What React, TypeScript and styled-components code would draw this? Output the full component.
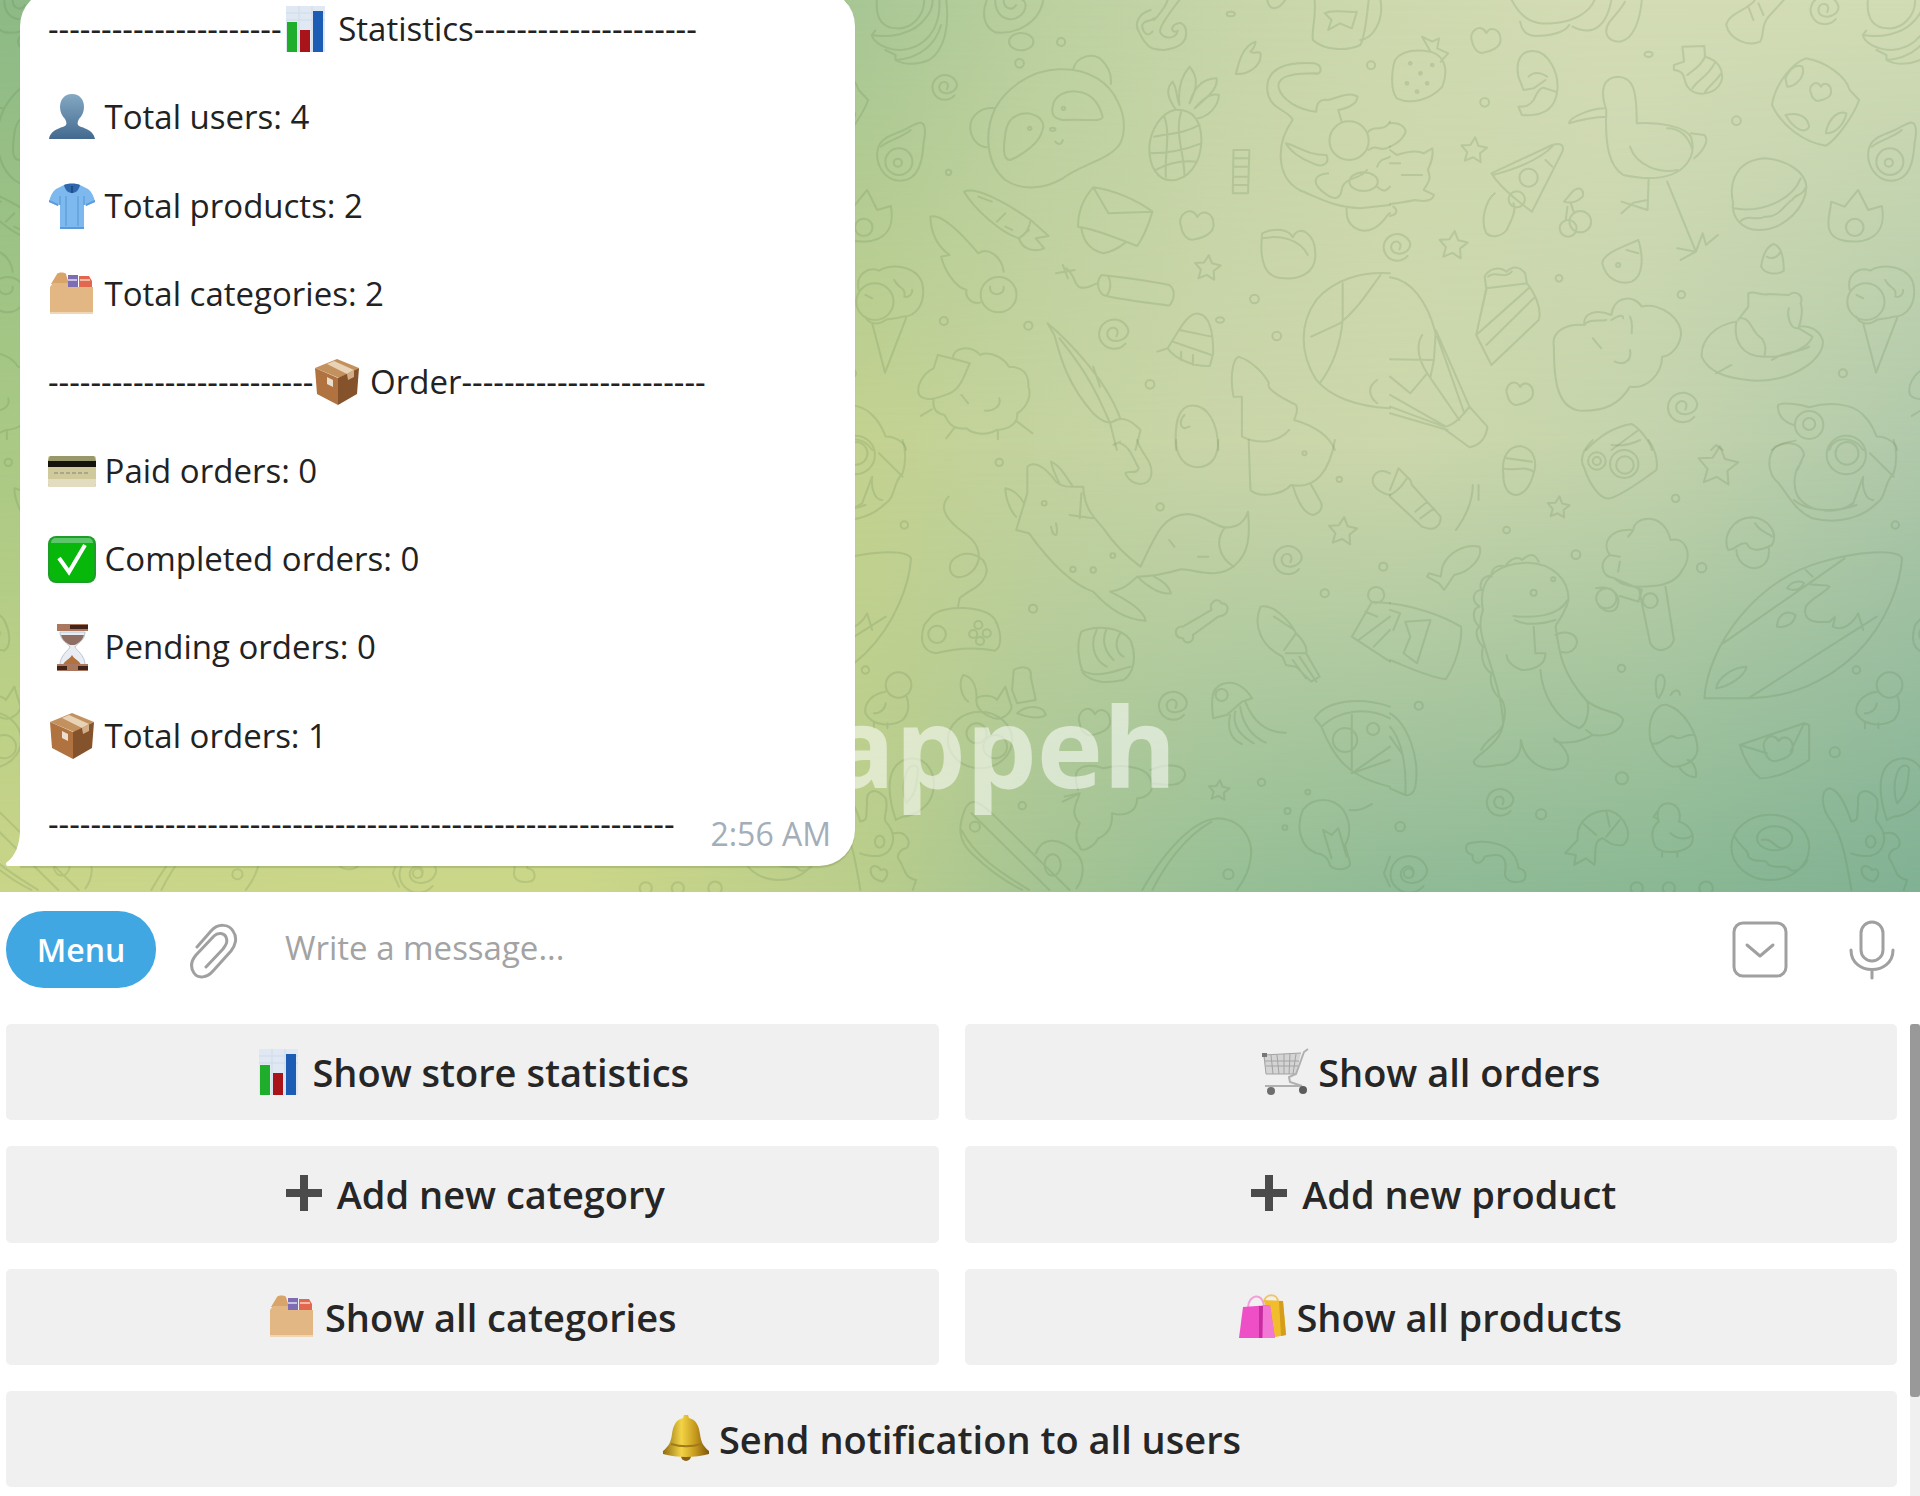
import React from 'react';
import styled, { createGlobalStyle } from 'styled-components';

const GlobalStyle = createGlobalStyle`
  *, *::before, *::after { box-sizing: border-box; }
  body {
    margin: 0;
    background: #ffffff;
    font-family: "Open Sans", "Noto Sans", sans-serif;
    color: #222222;
  }
  button, input { font-family: inherit; }
`;

/* ---------- wallpaper doodles ---------- */

const ring = (x: number, y: number, r: number, ry: number = r) =>
  `M${x - r} ${y}a${r} ${ry} 0 1 0 ${2 * r} 0a${r} ${ry} 0 1 0 ${-2 * r} 0`;

const swirl = (x: number, y: number, r: number) =>
  `M${x + r * 0.8} ${y + r * 0.7}A${r} ${r} 0 1 1 ${x + r} ${y - r * 0.2}` +
  `C${x + r} ${y + r * 0.7} ${x - r * 0.6} ${y + r * 0.8} ${x - r * 0.4} ${y - r * 0.1}` +
  `C${x - r * 0.2} ${y - r * 0.6} ${x + r * 0.5} ${y - r * 0.4} ${x + r * 0.2} ${y + r * 0.2}`;

const star = (x: number, y: number, r: number) => {
  const points = Array.from({ length: 10 }, (_, i) => {
    const a = (Math.PI / 5) * i - Math.PI / 2 + 0.1;
    const d = i % 2 ? r * 0.5 : r;
    return `${(x + d * Math.cos(a)).toFixed(1)} ${(y + d * Math.sin(a)).toFixed(1)}`;
  });
  return `M${points.join('L')}Z`;
};

const heart = (x: number, y: number, r: number) =>
  `M${x} ${y - r * 0.5}C${x - r * 0.4} ${y - r * 1.3} ${x - r * 1.3} ${y - r * 0.6} ${x - r} ${y + r * 0.1}` +
  `C${x - r * 0.9} ${y + r * 0.7} ${x - r * 0.5} ${y + r} ${x - r * 0.2} ${y + r * 0.9}` +
  `C${x + r * 0.4} ${y + r * 0.8} ${x + r} ${y + r * 0.5} ${x + r} ${y}C${x + r} ${y - r * 0.8} ${x + r * 0.3} ${y - r} ${x} ${y - r * 0.5}Z`;

const topLeft = [
  // bananas
  'M50 0C45 60 70 85 110 85C150 88 190 50 190 0M35 105C90 115 150 100 180 70C210 40 215 20 215 0M35 105C40 130 80 150 120 150C190 145 240 90 235 0M45 92L35 105M105 180C180 175 225 130 240 75M105 180C130 195 170 195 205 180C250 150 265 80 255 0M75 150L105 165V180',
  // snail bubble
  'M375 0C360 40 365 80 400 97C450 105 530 75 542 0M400 0C400 45 430 65 460 55C495 40 495 5 480 0M425 0C425 25 450 35 462 15',
  ring(477, 125, 36, 26), ring(595, 126, 12), ring(472, 190, 13), swirl(250, 260, 37),
  // avocado
  'M175 368C195 365 195 395 188 430C185 480 175 545 115 542C70 540 45 490 52 450C60 410 100 405 130 390C150 380 165 370 175 368Z',
  'M62 440C75 425 130 410 150 390', ring(115, 485, 40), ring(112, 488, 12), ring(262, 517, 8),
  // panda
  'M400 325C430 270 500 210 590 208C680 205 740 250 765 310C785 350 785 400 770 430C740 480 660 490 600 535C550 565 480 575 430 540C375 495 365 400 400 325Z',
  'M632 205C640 170 690 155 715 180C735 200 745 225 742 252M400 325C360 320 325 345 326 385C330 420 350 440 375 442',
  'M570 320C575 285 610 270 645 275C690 280 710 320 718 350C715 365 690 358 600 360C575 355 565 345 570 320ZM430 400C435 360 460 340 495 340C535 345 550 370 538 395C530 430 480 465 445 480C420 480 425 440 430 400Z',
  ring(602, 325, 5), ring(502, 385, 5), ring(570, 388, 8, 5), 'M578 425C585 435 598 435 600 420',
  // pineapple
  'M930 330C890 340 860 390 856 440C855 500 880 540 920 541C970 540 1010 490 1010 420C1010 370 990 325 930 330ZM870 410C920 400 960 400 1005 375M858 460C910 460 960 450 1010 430M875 510C910 490 950 480 995 485M900 350C920 400 900 470 905 530M950 335C930 400 960 460 960 530',
  'M935 330C915 300 900 270 925 245C940 270 935 290 945 315C940 270 950 230 975 200C1000 230 1000 260 975 310C985 270 1010 235 1055 235C1060 265 1030 290 990 325C1020 290 1040 280 1062 285C1060 320 1030 350 1000 355',
  // anchor
  'M860 30C825 40 810 70 825 95C850 150 870 150 900 150C940 145 965 130 965 100C965 75 950 60 930 75C915 90 930 100 940 92C935 115 905 120 890 100C880 90 900 60 945 0M865 95C850 115 835 95 835 75C840 60 860 65 870 55M870 60C880 50 905 20 910 0',
  'M1170 125C1130 140 1120 190 1112 222C1145 225 1190 200 1185 160C1180 150 1165 165 1155 155C1165 145 1170 135 1170 125Z',
  'M1105 450H1152L1148 580H1103ZM1105 475H1150M1105 500H1148M1104 530H1148M1104 555H1148',
  // mug
  'M1345 0C1350 60 1335 90 1340 120C1370 150 1440 155 1480 135C1495 110 1500 40 1505 0M1480 120C1520 115 1550 60 1540 0M1375 40C1400 25 1440 40 1470 35L1455 85L1420 70L1385 90L1395 60Z',
  'M1205 0C1210 30 1235 35 1258 0', ring(1097, 42, 12, 7), ring(1512, 196, 12),
  // carrot
  'M308 575C340 560 420 600 505 660C500 690 490 705 470 715C420 700 340 630 308 575ZM505 660L558 708L520 715L545 745C510 760 480 745 470 715L500 690M350 590L390 605M405 665L430 640M430 680L450 690',
  // comet
  'M208 650C240 640 300 700 350 760C380 740 420 770 425 815M208 650C210 700 230 740 265 765L240 770C250 810 280 860 315 870C310 890 330 915 355 908', ring(410, 884, 53), 'M385 860C380 890 430 890 425 860',
  // envelope
  'M690 562C750 570 820 600 865 635C855 670 840 710 820 738C770 720 710 690 645 680C645 630 665 590 690 562ZM690 562L735 640L865 635M655 685C660 720 680 750 720 760C750 755 770 740 785 728',
  heart(998, 675, 48), star(1028, 805, 40),
  // peach
  'M1190 700C1230 680 1270 690 1280 712C1300 670 1350 700 1347 770C1345 820 1300 838 1255 835C1200 835 1180 790 1190 700ZM1190 715C1240 705 1300 715 1325 765',
  // candle
  'M715 825C760 830 870 845 915 855C935 870 930 900 915 917C870 910 770 900 720 885C700 870 700 840 715 825ZM735 830C745 850 740 875 730 887M705 850C690 850 680 870 650 862C630 850 640 830 610 805M580 820L635 810M600 795L615 835',
  ring(248, 963, 12), ring(498, 977, 12), ring(1167, 897, 13), ring(1233, 1008, 13), ring(858, 1153, 13), swirl(750, 1000, 44), ring(1065, 960, 12, 8),
  // bell
  'M910 1045C940 1000 970 930 1005 942C1040 950 1045 1010 1045 1060L1035 1098C990 1100 935 1080 910 1045ZM945 990L1040 1010M925 1025L1040 1065M950 1055V1080M985 1065V1095M910 1045L880 1055',
  // sheep
  'M230 1065L218 1105C185 1120 165 1160 175 1185C195 1210 240 1190 265 1180C300 1165 310 1120 325 1090L270 1075L230 1065ZM275 1075C275 1040 330 1035 355 1065C390 1050 430 1080 440 1100C480 1100 500 1120 498 1160C510 1190 490 1225 465 1240C470 1275 430 1290 405 1290C370 1310 330 1300 315 1285C270 1290 260 1265 250 1245C220 1240 215 1220 218 1200M180 1248L212 1228M255 1315L278 1285M408 1318V1292M510 1300L465 1265M300 1185L320 1210M370 1232C390 1235 420 1220 412 1195',
  // paintbrush
  'M555 970C590 1000 720 1120 770 1255C740 1275 720 1270 690 1240C610 1150 590 1060 575 1005ZM590 1015C650 1090 690 1150 740 1270M740 1270C780 1240 810 1270 830 1290L815 1350M740 1270L760 1350M690 1100L710 1160',
  // egg shape
  'M935 1350C930 1270 940 1220 980 1217C1030 1215 1060 1270 1060 1350M960 1245C945 1260 945 1280 960 1285L975 1280',
  // tree
  'M1105 1190C1095 1140 1100 1080 1120 1070C1150 1080 1190 1110 1210 1150C1200 1165 1240 1190 1290 1215C1300 1235 1285 1250 1285 1260C1350 1280 1390 1310 1405 1350M1105 1190H1130V1310C1170 1330 1230 1335 1270 1290',
  // hot-air balloon
  'M1568 820C1480 815 1400 840 1350 900C1300 970 1300 1060 1350 1140C1390 1190 1470 1220 1568 1225M1428 850V960C1420 1050 1390 1110 1360 1150M1540 825C1500 880 1470 930 1420 970L1335 1010M1530 1140C1500 1160 1505 1190 1530 1210',
  // cat on a ring
  'M1345 190C1270 185 1200 200 1205 270C1210 330 1270 330 1280 360C1230 430 1230 530 1300 570C1370 600 1400 620 1480 625L1568 615M1350 220C1290 220 1235 225 1238 260C1245 300 1300 330 1350 335C1350 310 1360 295 1385 300C1420 290 1450 275 1472 290C1470 315 1440 325 1415 330L1425 365M1345 190C1365 195 1370 218 1350 222M1260 430C1300 440 1320 465 1380 465C1390 490 1370 505 1340 490C1300 475 1270 450 1260 430ZM1385 520C1340 525 1335 550 1375 580C1400 600 1420 600 1425 570C1430 530 1480 540 1500 510',
  ring(1447, 422, 58), ring(1490, 545, 42, 28), 'M1440 625C1435 680 1480 705 1520 685C1550 670 1560 640 1568 640',
  'M1500 400C1520 370 1550 400 1568 365M1505 450C1530 430 1540 460 1568 440M1530 500C1540 470 1560 480 1568 470M1530 560C1550 580 1560 570 1568 560',
].join('');

const topRight = [
  'M360 0C390 60 430 75 480 70C540 65 590 40 605 0M385 65C390 90 400 105 430 108C480 108 520 95 530 75M540 80C600 110 640 80 655 0M745 0C740 60 720 120 680 125C640 125 630 95 650 65C670 40 690 20 695 5',
  heart(285, 120, 42),
  // strawberry
  'M15 180C40 145 90 150 120 155C170 170 170 220 155 260C120 300 60 315 20 295C0 270 5 210 15 180ZM120 155L95 110L125 125L145 115L140 145L172 160L150 185',
  ring(60, 190, 4), ring(90, 220, 4), ring(50, 250, 4), ring(110, 250, 4), ring(80, 275, 4), ring(125, 195, 4),
  // kitten holding on to the ring
  'M0 370C30 365 50 385 45 400C30 430 10 435 0 440M0 450L20 465C50 455 80 450 100 460L125 445C130 470 120 490 112 510C125 540 110 550 100 570L130 585C125 605 100 605 75 600C50 605 20 610 0 612M0 490H30M35 525H95M10 620C25 630 20 645 0 648',
  // hatching egg
  'M380 230C370 180 390 150 425 153C470 155 500 220 495 270C490 330 450 350 390 345L380 320C400 320 410 320 425 300C440 265 450 260 460 265L490 275M380 230L395 270L425 265L460 240M410 230C430 210 450 220 465 230',
  ring(280, 307, 13), ring(765, 163, 12, 8), ring(1025, 362, 13), ring(862, 884, 11), ring(500, 835, 10), ring(1340, 1120, 12),
  // bone and swirl
  'M1080 0C1060 30 1000 40 995 75C1005 120 1060 140 1095 125C1110 100 1095 80 1120 50L1165 0M1060 20L1075 60M1090 10L1105 45', swirl(1285, 28, 42),
  // acorn
  'M865 140L930 138L932 170C970 180 990 210 980 245C960 290 900 290 880 260C865 240 880 215 840 210L840 195L870 185ZM932 170C920 200 890 215 880 225M960 190C940 230 910 240 895 265M980 220C960 250 940 260 930 280',
  // stork
  'M640 330C620 270 630 232 675 230C720 232 730 270 730 370C800 365 870 380 890 410C900 440 900 470 870 500C830 540 760 540 690 525C650 500 635 440 640 330ZM635 325C600 325 530 350 530 370C560 360 610 350 640 350M890 400L930 405C945 420 930 450 900 475M710 440C730 500 800 520 850 510M820 385C850 385 880 400 895 450M765 540L762 630L685 605M762 600L720 608L685 640M820 545L905 755L850 745M905 755L860 780M905 755L925 700L935 735L970 705',
  // cherries and pizza
  ring(563, 665, 32), ring(527, 685, 25), 'M540 575C560 555 575 570 570 590C550 610 530 610 515 605L540 575M535 610L545 640M525 620L520 660',
  'M300 520L480 435C510 425 515 440 510 455L420 635C400 620 330 570 300 520ZM305 525C380 505 440 480 480 440M310 580C285 600 265 660 285 700C300 715 330 710 345 690C360 660 375 630 365 610M460 480L480 500', ring(410, 533, 27), ring(375, 598, 24),
  star(248, 452, 40), star(187, 737, 44), swirl(20, 740, 40),
  // pillow with hearts
  'M1230 175C1290 185 1350 230 1360 270L1388 300C1370 350 1320 420 1290 437C1230 430 1160 380 1130 315C1140 250 1190 190 1230 175ZM1170 235C1180 210 1200 190 1220 200C1230 230 1200 260 1175 260ZM1170 345C1210 335 1235 350 1240 380C1230 400 1200 395 1170 345ZM1290 395C1300 350 1330 330 1350 340C1345 370 1320 400 1290 400Z', heart(1275, 275, 30),
  // burger
  'M1015 610C1000 540 1030 480 1110 475C1180 480 1230 520 1232 560C1230 620 1170 690 1090 690C1040 690 1010 650 1015 610ZM1015 625C1100 640 1190 600 1215 535M1035 665C1060 640 1080 665 1110 650C1150 655 1170 610 1190 600C1200 580 1220 590 1228 565',
  // fire
  'M1385 570L1415 630L1455 618C1465 670 1450 710 1400 722C1350 730 1310 720 1300 690C1290 660 1305 630 1305 605L1345 620Z', ring(1375, 682, 26),
  'M735 720C690 740 630 760 628 790C640 840 680 855 715 845C750 830 750 770 735 720ZM700 750L735 760', ring(675, 795, 6),
  'M1135 732C1110 740 1100 780 1098 800C1110 825 1150 825 1165 812C1165 780 1160 740 1135 732ZM1115 770C1130 780 1150 770 1155 755',
  // cake slice
  'M280 830L285 865L255 1005L300 1095L440 960C450 930 430 880 405 850L400 820C380 795 360 800 345 815C320 795 290 810 280 830ZM285 865L405 850M255 1005L410 865M285 1035L430 890M285 870L260 980M290 830C310 810 340 840 360 815',
  // balloon right half
  'M0 832C60 840 110 900 135 1000L130 1080L0 1078M0 1185L165 1280C190 1275 220 1240 235 1220L135 990M95 1005C75 1040 85 1080 110 1120L60 1180L0 1130M110 1120L205 1260M140 1010L220 1240M130 1080L120 1130M0 1220L160 1280M0 1240L170 1290M235 1220L288 1280C285 1310 270 1335 235 1342L165 1290',
  heart(385, 1180, 38),
  // cloud
  'M485 1040C475 990 530 970 575 975C570 940 610 925 655 945C660 890 720 880 745 920C800 905 870 960 860 1010C855 1040 830 1070 805 1070C805 1120 760 1170 710 1160C680 1210 640 1235 560 1232C490 1220 485 1130 485 1040ZM575 975C590 955 620 965 640 960M710 950C720 970 715 985 715 1000M655 960C670 950 690 940 690 955M600 1015L625 1045M665 1085C700 1100 715 1075 710 1050', swirl(865, 1220, 44),
  // bear in a ring
  'M1060 880C1080 870 1100 890 1120 882L1180 885C1200 870 1225 885 1215 910C1225 935 1210 990 1205 985C1180 985 1175 940 1180 925M1060 880L1060 920L1030 960M1025 965C960 975 920 1020 922 1070C940 1110 980 1135 1080 1142C1200 1145 1290 1070 1280 1020C1270 990 1240 975 1210 980M1025 965C1015 1020 1040 1070 1105 1070C1180 1075 1240 1040 1250 1010L1210 985M1040 955C1070 955 1070 1000 1100 1015C1115 1040 1110 1050 1108 1070M965 1120L1010 1095M1130 1080C1170 1050 1210 1060 1240 1040',
  // ice cream
  ring(1408, 905, 55), 'M1360 870C1350 820 1390 800 1420 812C1450 790 1530 795 1548 850C1560 910 1530 950 1490 950C1470 958 1450 955 1440 960C1420 975 1390 975 1380 950M1465 840C1480 870 1500 860 1495 890C1510 895 1520 880 1518 870M1400 970L1438 1118L1500 955M1380 885L1400 895',
  'M580 1350C620 1310 660 1280 715 1272C745 1290 770 1330 775 1350M655 1350L735 1290M950 1350L965 1335L985 1350',
  // penguin head
  'M1195 1275C1160 1265 1145 1240 1148 1215C1170 1205 1220 1215 1240 1222C1300 1205 1370 1210 1400 1245C1430 1275 1435 1300 1440 1310C1470 1310 1500 1330 1500 1350M1130 1350C1150 1330 1180 1325 1200 1322M1300 1350C1310 1310 1370 1305 1400 1350', ring(1240, 1275, 42), ring(1240, 1272, 18),
].join('');

const bottomLeft = [
  ring(412, 67, 11), ring(888, 201, 11), ring(512, 506, 12), ring(1315, 40, 6), ring(1418, 118, 8), ring(1375, 460, 12), ring(1548, 380, 12), ring(480, 1097, 11), ring(1188, 1027, 11), ring(1090, 1303, 15),
  'M770 10C800 20 810 60 825 85C820 105 790 90 785 100C800 140 860 145 862 100C865 60 830 40 820 0M750 15L770 5M935 0C935 50 960 80 998 82C1040 80 1060 50 1060 0',
  'M1150 0L1155 150C1180 175 1250 165 1275 135C1350 150 1390 90 1405 0M1280 135C1290 170 1310 220 1340 225C1370 215 1370 195 1360 180L1335 135',
  // cable and gamepad
  'M262 170C235 200 250 230 290 265C330 295 350 310 352 350C350 385 320 412 290 412C260 405 260 370 280 355C310 330 370 340 375 390C370 440 320 450 295 475L290 500',
  'M215 525C250 495 370 495 400 540C420 580 420 620 400 632C340 620 280 625 225 640C185 635 175 600 190 555Z', ring(228, 583, 26), ring(350, 555, 12), ring(375, 580, 12), ring(335, 582, 12), ring(355, 603, 12),
  // fox
  'M495 80C510 65 540 70 580 125C600 145 630 140 660 140C665 200 680 220 720 265C750 310 790 350 830 380C880 270 900 225 970 222C1020 225 1050 260 1080 262C1120 265 1140 240 1148 215C1155 290 1150 340 1110 375C1060 420 1000 390 950 388C910 400 870 410 820 410C790 440 770 450 740 455M495 80L495 160L462 270L500 280C550 350 620 430 690 455C730 500 780 540 845 542C840 510 790 480 740 455M430 145C430 180 450 220 462 230M430 145C455 150 475 170 485 190M565 65C590 75 610 110 630 140M565 65C570 90 580 110 590 130M1080 262C1050 300 1060 350 1105 380M820 410C850 440 890 465 920 460C915 440 900 425 870 410M620 225L690 235M655 160L650 235M565 260C570 290 590 300 580 250', ring(545, 190, 7), ring(630, 388, 8), ring(690, 390, 8), ring(748, 347, 7),
  'M915 300L930 320M1000 350H1030',
  star(1428, 275, 44), swirl(1265, 358, 42), swirl(925, 795, 42), star(1062, 1052, 32),
  // bone
  'M955 560L1040 510C1030 485 1060 470 1070 490C1095 490 1095 525 1060 530L985 585C990 610 960 615 955 595C925 595 930 555 955 560Z',
  // shell
  'M655 575C700 555 770 560 800 600C820 650 810 700 780 720C730 730 690 730 660 700C645 660 640 610 655 575ZM700 570C680 610 690 660 730 680M730 565C710 610 730 640 750 660M770 580C750 610 760 640 780 650M655 690C700 720 760 690 800 680',
  // squid
  'M1185 500C1220 490 1270 540 1290 580C1310 600 1325 620 1320 640L1360 710L1335 725L1290 680L1260 675L1250 650C1190 620 1160 560 1185 500ZM1290 580L1255 630M1320 640L1260 640M1300 650L1350 725M1280 660L1320 715M1225 530L1285 570',
  // flag left half
  ring(1527, 465, 24), 'M1568 490L1515 485L1455 590L1568 665M1495 515L1530 530M1520 620L1568 570M1475 600L1568 530M1568 100C1530 80 1510 110 1520 135C1535 160 1568 165 1568 165',
  // potted deer
  'M305 705C330 710 345 735 345 775C365 760 400 770 405 780L430 740L445 790C460 810 420 850 385 830C360 820 340 800 345 775M455 690C480 675 510 680 505 710L520 780L465 790L450 750ZM305 705C290 730 300 770 320 785M465 820C500 790 545 800 550 825C530 840 490 830 465 820', ring(355, 900, 95, 85), ring(345, 880, 30), ring(400, 920, 35),
  heart(695, 845, 45),
  // jellyfish
  'M1045 760C1060 720 1120 710 1160 775L1130 785L1085 825L1045 835C1040 800 1040 780 1045 760ZM1095 825C1085 870 1100 900 1130 912M1110 815C1100 860 1130 890 1165 910M1125 800C1130 850 1160 890 1200 908M1140 785C1160 840 1200 880 1260 878', ring(1070, 765, 18),
  // pizza
  'M1345 835C1380 780 1480 770 1568 800M1345 835L1365 860C1420 810 1500 800 1568 835M1365 860C1400 950 1440 1010 1568 1040M1455 815V1000L1568 920M1455 1000L1568 960', ring(1435, 900, 36), ring(1518, 867, 18),
  // smoke
  'M640 1000C650 970 700 975 720 985C780 970 860 980 862 1030C870 1060 840 1075 820 1075C820 1120 780 1130 745 1120C750 1170 720 1190 705 1195C690 1225 650 1240 650 1220C630 1190 645 1160 650 1150C620 1120 640 1090 650 1060L600 1085M650 1060L605 1070M640 1000C635 1020 640 1030 645 1050M860 990C900 970 960 970 962 1005C955 1045 900 1035 862 1030',
  // ship
  'M310 1110C290 1160 290 1200 330 1240C390 1300 440 1330 480 1350M310 1110C330 1060 370 1100 400 1130L620 1350M330 1120L560 1350M300 1170C340 1250 420 1300 500 1350M520 1240C540 1190 590 1190 640 1240C670 1270 660 1320 640 1345', ring(340, 1160, 15), ring(570, 1275, 24, 32),
  // whale
  'M835 1350C880 1270 970 1140 1060 1135C1140 1140 1165 1210 1155 1260C1150 1300 1130 1330 1115 1350M865 1350C900 1280 960 1190 1040 1145',
  // light bulb
  'M1390 1275C1385 1250 1365 1240 1350 1240C1300 1220 1290 1160 1310 1110C1340 1070 1400 1070 1430 1110C1455 1150 1450 1190 1435 1215C1440 1240 1450 1260 1450 1275C1435 1295 1400 1290 1390 1275ZM1370 1170L1395 1255M1415 1165L1440 1250M1370 1170L1395 1185L1415 1165',
  ring(1265, 1113, 9), ring(1257, 1163, 7), ring(1325, 1056, 7), 'M1448 1110C1480 1115 1500 1100 1515 1092M1568 1250L1550 1300L1568 1340',
].join('');

const bottomRight = [
  // flashlight
  'M0 150L25 85L60 120L65 135L150 230C150 260 130 275 95 260L0 170M0 165C30 150 40 130 50 115M75 215L110 185M90 235L130 205',
  'M245 135C245 190 220 235 195 270M262 135V180M335 100C330 50 350 20 385 18C430 25 435 70 425 100C415 140 395 165 370 165C340 160 335 130 335 100ZM335 85C365 95 400 75 425 95M345 55L420 65',
  star(498, 203, 34), star(970, 80, 62), ring(345, 270, 10), ring(845, 175, 11), ring(550, 344, 13), ring(922, 383, 14), ring(1495, 255, 11), ring(685, 685, 11), ring(85, 797, 12), ring(686, 1015, 18), ring(447, 1123, 15), ring(1316, 937, 15), ring(1380, 690, 11), ring(30, 1160, 14), ring(730, 1345, 18), ring(825, 1345, 18), ring(935, 1345, 20),
  // camera
  'M600 0C570 30 560 60 575 85C590 130 620 180 650 175C690 165 760 110 788 90C795 60 780 20 765 0M655 15C690 20 720 10 740 0', ring(693, 72, 42), ring(695, 75, 26), ring(612, 63, 26), ring(612, 63, 12),
  // penguin body
  'M1140 20C1115 50 1115 100 1150 130C1175 160 1195 210 1250 235C1330 255 1400 230 1440 190C1470 170 1460 130 1490 100C1500 70 1500 30 1490 0M1215 70C1190 100 1190 160 1220 185C1250 215 1320 225 1370 190L1400 110M1140 20C1180 0 1220 10 1225 45L1205 90M1195 180C1240 220 1330 215 1380 195M1400 110C1395 150 1410 180 1430 180M1420 40L1490 110', ring(1350, 45, 58), ring(1352, 40, 34),
  // fish
  'M155 380C170 340 220 310 265 320C275 350 240 395 190 405L160 450L145 430L110 410L115 400L150 410Z',
  // tree
  'M720 270C720 230 810 210 830 300C880 290 895 350 865 390C840 440 780 440 735 440C700 440 670 425 665 415C620 410 620 360 650 345C625 310 650 265 720 270M720 270L705 290M650 345L680 350M680 365L675 395M665 415L745 450L735 485L680 468M610 445C650 435 680 460 675 490C670 520 640 520 620 500M735 440L770 610C790 645 830 630 840 600L815 440', ring(770, 482, 22), ring(640, 475, 30),
  // mushroom
  'M1000 330C985 290 1010 235 1070 232C1120 235 1150 280 1130 315C1100 330 1070 340 1055 310C1030 305 1025 330 1000 330ZM1025 330C1025 360 1050 385 1080 385C1115 380 1125 350 1120 320M1080 250C1100 280 1115 275 1130 290',
  // dinosaur
  'M275 510C260 430 300 370 410 368C480 370 530 420 528 480C515 530 490 550 490 560C500 640 510 700 580 780C620 820 680 810 690 840C680 880 640 890 600 885C560 910 520 910 490 905L485 895C530 930 540 970 510 985C460 1000 400 970 387 900C390 940 370 975 320 975C270 985 240 980 250 960C280 930 330 900 335 850C330 760 300 690 275 600C265 560 265 540 275 510Z',
  'M365 528C420 535 500 530 525 480M370 540C400 560 460 550 490 540M425 560L430 640L460 640C460 680 420 690 390 690C360 680 345 660 345 645M445 690C450 760 490 840 560 865C590 850 590 790 580 780M600 885L580 870M490 585C520 570 555 580 553 610C545 640 520 640 505 635',
  'M390 360C420 335 430 345 440 365M340 380C360 350 385 350 390 360M300 410C300 375 330 375 340 380M270 450C260 420 290 400 300 410M265 500C235 480 250 450 270 450M265 560C240 540 245 500 265 500M275 620C255 600 250 570 265 560M300 700C270 680 270 640 275 620M320 770C300 750 295 720 300 700M335 850C345 820 340 780 320 770M270 930C280 900 330 880 335 850', ring(425, 458, 9), ring(483, 418, 6),
  // flag right half
  'M0 490C70 500 150 525 210 560C215 610 190 680 165 718C110 710 50 680 0 660M45 545L120 540L80 670L40 640L60 590ZM0 510L30 520L10 570',
  // pizza crust
  'M0 820C50 850 90 950 75 1040C70 1060 60 1068 45 1065L0 1045M0 860C35 900 50 980 45 1065M0 890L35 940',
  // surfboard
  'M930 775C940 620 1080 420 1280 365C1380 335 1500 325 1515 355C1510 430 1470 550 1380 640C1290 730 1170 775 1060 775ZM985 610L1240 430L1345 355M1060 775L1440 530M1240 430C1245 440 1290 430 1300 440C1280 465 1250 470 1230 500C1220 540 1250 550 1300 545C1320 530 1320 520 1310 560C1340 575 1370 550 1385 520L1400 570M965 745C970 710 1020 680 1055 680C1050 710 1000 740 965 745ZM1145 560C1145 530 1170 505 1200 525C1195 555 1165 565 1145 560ZM1175 445C1185 425 1215 420 1225 430C1215 450 1195 455 1175 445ZM1250 410L1230 390',
  // popsicle
  'M770 900C760 830 790 790 820 795C870 810 910 880 910 930C905 970 860 980 835 980C800 965 780 930 770 900ZM775 910C800 920 820 880 840 890C860 905 870 880 900 885M855 980C865 1000 890 1015 905 1010C910 980 890 960 880 960M790 770C780 720 790 700 805 705C820 720 810 750 795 775M830 765C840 750 855 745 858 765',
  // love letter
  'M1035 915L1225 850L1240 855L1240 960C1200 990 1140 1015 1095 1015C1065 990 1045 950 1035 915ZM1035 915L1115 940M1225 850L1185 935', heart(1150, 925, 42),
  // ducklings
  ring(1478, 735, 38), 'M1440 755C1400 760 1375 790 1380 820C1400 860 1460 860 1490 840C1510 820 1510 790 1500 765M1405 820C1425 820 1440 805 1440 790M1405 865V850M1445 865V850',
  'M795 1145C785 1110 800 1090 825 1090C860 1095 860 1130 855 1145C890 1155 905 1190 890 1215C860 1245 800 1240 785 1220C770 1190 775 1160 795 1145ZM795 1110L780 1130L795 1140M830 1180C850 1200 880 1200 895 1185M805 1250V1238M850 1250V1238',
  swirl(325, 1085, 40), swirl(55, 1300, 55), ring(55, 1300, 14),
  // bone and tooth
  'M235 1210C270 1200 370 1200 380 1285C410 1290 405 1325 385 1325C360 1330 340 1320 340 1300C350 1240 320 1240 280 1250C270 1280 240 1270 245 1245C220 1240 220 1215 235 1210Z',
  'M555 1200C550 1140 600 1110 650 1112C700 1130 720 1190 690 1215C650 1220 640 1200 630 1195C600 1200 610 1240 605 1275L580 1255L545 1275L550 1245L518 1240ZM570 1150L610 1185M640 1115L650 1160M680 1140L640 1190',
  // donut
  ring(1125, 1222, 115, 98), ring(1138, 1195, 52, 36), 'M1020 1190C1040 1230 1060 1225 1060 1250C1080 1275 1110 1250 1120 1275C1150 1290 1170 1270 1185 1290C1210 1300 1230 1270 1235 1260M1100 1200C1130 1190 1140 1230 1165 1225',
  // bunny with balloon
  'M1365 1350C1350 1260 1340 1200 1310 1150C1270 1100 1275 1050 1300 1045C1330 1050 1350 1100 1365 1145C1390 1140 1380 1130 1385 1090C1380 1050 1410 1040 1440 1075C1450 1110 1430 1130 1440 1145C1480 1190 1460 1240 1420 1248C1400 1250 1375 1245 1365 1240M1465 1180C1500 1170 1520 1210 1500 1225C1480 1230 1470 1250 1480 1260C1500 1290 1490 1310 1530 1320L1520 1350M1395 1290C1400 1270 1420 1280 1425 1290C1450 1280 1450 1310 1430 1325C1410 1320 1395 1310 1395 1290ZM1470 1140C1440 1050 1440 960 1520 955C1590 960 1600 1060 1555 1100C1530 1125 1500 1130 1490 1130ZM1500 1000C1510 970 1540 970 1535 995C1530 1040 1530 1060 1500 1090C1490 1060 1490 1030 1500 1000Z', ring(1422, 1205, 14, 18),
].join('');

const Wallpaper = styled.svg`
  position: absolute;
  z-index: 1;
  left: 0;
  bottom: 0;
  width: 1920px;
  height: 892px;
  fill: none;
  stroke: #567a48;
  stroke-opacity: 0.18;
  stroke-width: 6;
  stroke-linejoin: round;
  stroke-linecap: round;
`;

function Doodles() {
  return (
    <Wallpaper viewBox="0 0 1920 892" aria-hidden="true">
      <defs>
        <g id="doodle-tile">
          <path transform="translate(860 0) scale(.338 .3333)" d={topLeft} />
          <path transform="translate(1390 0) scale(.338 .3333)" d={topRight} />
          <path transform="translate(860 440) scale(.338 .3333)" d={bottomLeft} />
          <path transform="translate(1390 440) scale(.338 .3333)" d={bottomRight} />
        </g>
      </defs>
      <use href="#doodle-tile" />
      <use href="#doodle-tile" x="-991" />
      <use href="#doodle-tile" x="991" />
    </Wallpaper>
  );
}

/* ---------- emoji ---------- */

const EmojiSvg = styled.svg`
  flex: none;
  width: 48px;
  height: 48px;
`;

type EmojiName =
  | 'chart' | 'user' | 'shirt' | 'folder' | 'box' | 'card' | 'check'
  | 'hourglass' | 'cart' | 'plus' | 'bags' | 'bell';

const drawings: Record<EmojiName, React.ReactNode> = {
  chart: (
    <>
      <rect x="4" y="1" width="39" height="46" fill="#dfe8f3" />
      <path d="M4 8h39M4 15h39M17 1v46M30 1v46" stroke="#cfdcea" strokeWidth="1" />
      <rect x="5" y="17" width="10" height="30" fill="#1fae2b" />
      <rect x="18" y="25" width="10" height="22" fill="#a81419" />
      <rect x="31" y="6" width="10" height="41" fill="#1c5cb4" />
    </>
  ),
  user: (
    <>
      <linearGradient id="user-fill" x1="0" y1="0" x2="0" y2="1">
        <stop offset="0" stopColor="#84a9c4" />
        <stop offset="1" stopColor="#43698f" />
      </linearGradient>
      <path
        fill="url(#user-fill)"
        d="M24 1c8 0 12 6 12 13 0 5-2 9-5 12-1 2-2 4-1 6 2 3 15 3 17 14H1c2-11 15-11 17-14 1-2 0-4-1-6-3-3-5-7-5-12C12 7 16 1 24 1z"
      />
    </>
  ),
  shirt: (
    <>
      <path fill="#7db9ee" d="M16 3l-8 4C4 10 2 15 1 20l9 4 2-3v26h24V21l2 3 9-4c-1-5-3-10-7-13l-8-4z" />
      <path fill="#5b9ad6" d="M1 18l9 4v2l-9-4zM47 18l-9 4v2l9-4zM12 45h24v2H12z" />
      <path stroke="#69a7e0" strokeWidth="2" fill="none" d="M18 14v30M30 14v30M12 14v9M36 14v9" />
      <path fill="#2e67ac" d="M16 3c3-2 13-2 16 0-1 5-4 8-8 8s-7-3-8-8z" />
      <path stroke="#1f4c86" strokeWidth="2" d="M24 4v7" />
    </>
  ),
  folder: (
    <>
      <path fill="#d9a469" d="M3 14l6-10c1-2 8-2 9 0l3 10z" />
      <path fill="#7f6db3" d="M20 5h10v13H20z" />
      <path fill="#c9c3e2" d="M20 9h9v2h-9z" />
      <path fill="#e2674f" d="M31 6h10l3 5v7H31z" />
      <path fill="#f3b8a6" d="M32 9h10v2H32z" />
      <path fill="#e2b783" d="M2 17l3-4h15v4h25v26H2z" />
      <path fill="#f0d7b4" d="M2 42h43v2H2z" />
    </>
  ),
  box: (
    <>
      <path fill="#c3915e" d="M24 1l22 9-20 10L2 10z" />
      <path fill="#b0723f" d="M2 10l23 10v27L4 36z" />
      <path fill="#85532b" d="M46 10L25 20v27l19-11z" />
      <path fill="#e8d3b6" d="M14 6l7-3 20 9-7 4z" />
      <path fill="#d2ad85" d="M34 16l7-4v7l-6 3z" />
      <path fill="#eadfce" d="M14 19l6 3v7l-6-3z" />
    </>
  ),
  card: (
    <>
      <rect x="0" y="9" width="48" height="31" rx="2" fill="#cfc99c" />
      <path fill="#98996a" d="M2 9h44l2 5H0z" />
      <path fill="#15140c" d="M0 14h48v6H0z" />
      <path fill="#e3dcc0" d="M0 32h48v5l-2 3H2l-2-3z" />
      <path stroke="#a9a68a" strokeWidth="2" strokeDasharray="4 2" d="M6 26h36" />
    </>
  ),
  check: (
    <>
      <rect x="0" y="1" width="48" height="47" rx="8" fill="#1f9d2a" />
      <rect x="2" y="3" width="44" height="43" rx="6" fill="#07b80b" />
      <path fill="#5bc768" d="M8 3h32c3 0 5 2 5 5H3c0-3 2-5 5-5z" />
      <path d="M11 23l10 14 16-27" fill="none" stroke="#ffffff" strokeWidth="4" />
    </>
  ),
  hourglass: (
    <>
      <path fill="#e9edf3" stroke="#b8c3d4" d="M12 9h25c0 9-9 12-10 15 1 3 10 8 10 18H12c0-10 9-15 10-18-1-3-10-6-10-15z" />
      <path fill="#8f6f63" d="M13 12h23c-2 7-8 9-9 10h-5c-1-1-7-3-9-10z" />
      <path fill="#b2713f" d="M15 42c2-5 6-5 9-10 3 5 7 5 9 10z" />
      <path fill="#a9785f" d="M9 1h31v7H9zM9 41h31v7H9z" />
      <path fill="#43241a" d="M22 2h18v4H22zM9 43h10v4H9zM30 43h10v4H30z" />
    </>
  ),
  cart: (
    <>
      <path fill="#d4d4d4" d="M2 7l38-2-5 21H5z" />
      <path
        fill="none"
        stroke="#a3a3a3"
        strokeWidth="1"
        d="M3 7l37-2M4 13h34M5 18h32M5 26h30M3 7l2 19M10 7l2 19M16 7l2 19M23 6l0 20M29 6l-1 20M35 6l-3 20"
      />
      <path fill="none" stroke="#b0b0b0" strokeWidth="2" d="M47 1l-4 3-8 22-7 3 1 5 12 4H4" />
      <path fill="#777777" d="M1 5h5v4H1z" />
      <circle cx="10" cy="43" r="4" fill="#6e6e6e" />
      <circle cx="42" cy="42" r="4" fill="#5c5c5c" />
    </>
  ),
  plus: <path fill="#4b4b4b" d="M20 5h8v14h14v8H28v14h-8V27H6v-8h14z" />,
  bags: (
    <>
      <path fill="none" stroke="#edc46f" strokeWidth="2" d="M25 9c1-9 14-9 14 0" />
      <path fill="#f2bd2c" d="M25 7l19 1 3 34-16 3z" />
      <path fill="#d59d1c" d="M40 8l4 0 3 34-5 1z" />
      <path fill="none" stroke="#f3a0d8" strokeWidth="2" d="M9 15c0-14 15-16 16-2" />
      <path fill="#ee4fc7" d="M4 14l27-2 5 33H0z" />
      <path fill="#c2309d" d="M20 13l4 0-1 32h-3z" />
      <path fill="#f792de" d="M24 13l7-1 5 33H24z" opacity=".6" />
    </>
  ),
  bell: (
    <>
      <linearGradient id="bell-fill" x1="0" y1="0" x2="1" y2="0">
        <stop offset="0" stopColor="#8f6a12" />
        <stop offset=".4" stopColor="#f3d445" />
        <stop offset=".7" stopColor="#c69a1d" />
        <stop offset="1" stopColor="#7c560f" />
      </linearGradient>
      <circle cx="24" cy="41" r="5" fill="#8a6114" />
      <path fill="url(#bell-fill)" d="M22 0h4l1 3c8 2 10 9 11 16 1 8 3 12 9 17v3c-14 4-32 4-46 0v-3c6-5 8-9 9-17 1-7 3-14 11-16z" />
      <path fill="none" stroke="#a17a17" strokeWidth="2" d="M9 29c10 3 20 3 30 0" />
    </>
  ),
};

function Emoji({ name }: { name: EmojiName }) {
  return (
    <EmojiSvg viewBox="0 0 48 48" aria-hidden="true">
      {drawings[name]}
    </EmojiSvg>
  );
}

/* ---------- chat ---------- */

const Page = styled.main`
  position: relative;
  display: flex;
  flex-direction: column;
  height: 100vh;
  overflow: hidden;
`;

const Chat = styled.section`
  position: relative;
  flex: 1;
  min-height: 0;
  display: flex;
  flex-direction: column;
  justify-content: flex-end;
  align-items: flex-start;
  padding: 0 20px 26px;
  overflow: hidden;
  background: linear-gradient(90deg, #8dba86, #98c28b 35%, #a8c795 45%, #bbd09f 54%, #c6d5a8 63%, #ced9ae 72%, #d4dcb6 84%, #d2dcb4);

  &::before,
  &::after {
    content: "";
    position: absolute;
    inset: 0;
  }
  &::before {
    background: linear-gradient(90deg, #aac985, #c0d289 35%, #c3d290 45%, #c4d39f 54%, #c9d5a8 63%, #ccd7ab 73%, #c3d3ac 86%, #b0c9aa);
    mask-image: linear-gradient(transparent, #000 50%);
  }
  &::after {
    background: linear-gradient(90deg, #c9d588, #cbd688 30%, #b9cd8b 45%, #a5c493 54%, #97bf95 63%, #8fba96 73%, #8ab893 86%, #80b193);
    mask-image: linear-gradient(transparent 50%, #000);
  }
`;

const Bubble = styled.article`
  position: relative;
  z-index: 2;
  flex: none;
  display: flex;
  flex-direction: column;
  justify-content: space-between;
  width: 835px;
  max-width: 100%;
  min-height: 876px;
  padding: 15px 24px 18px 28px;
  background: #ffffff;
  border-radius: 36px 36px 36px 0;
  box-shadow: 0 2px 1px rgba(90, 120, 60, 0.25);
`;

const Tail = styled.svg`
  position: absolute;
  right: 100%;
  bottom: 0;
  width: 14px;
  height: 36px;
  fill: #ffffff;
`;

const Line = styled.p`
  display: flex;
  align-items: center;
  height: 48px;
  margin: 0;
  font-size: 33px;
  line-height: 48px;
  white-space: pre;
`;

const Time = styled.time`
  margin-left: auto;
  padding-top: 20px;
  color: #a3aeb8;
  font-size: 32px;
`;

const Watermark = styled.div`
  position: absolute;
  inset: 0;
  z-index: 2;
  display: flex;
  align-items: center;
  justify-content: center;
  padding: 0 0 8px 84px;
  color: rgba(255, 255, 255, 0.55);
  font-size: 112px;
  font-weight: 700;
  pointer-events: none;
`;

const dashes = (count: number) => '-'.repeat(count);

const storeStats: { icon: EmojiName; text: string }[] = [
  { icon: 'user', text: 'Total users: 4' },
  { icon: 'shirt', text: 'Total products: 2' },
  { icon: 'folder', text: 'Total categories: 2' },
];

const orderStats: { icon: EmojiName; text: string }[] = [
  { icon: 'card', text: 'Paid orders: 0' },
  { icon: 'check', text: 'Completed orders: 0' },
  { icon: 'hourglass', text: 'Pending orders: 0' },
  { icon: 'box', text: 'Total orders: 1' },
];

/* ---------- composer ---------- */

const Composer = styled.form`
  flex: none;
  display: flex;
  align-items: center;
  padding: 19px 24px 36px 6px;
  background: #ffffff;
`;

const MenuButton = styled.button`
  width: 150px;
  height: 77px;
  padding: 0;
  border: 0;
  border-radius: 38px;
  background: #40a7e3;
  color: #ffffff;
  font-size: 32px;
  font-weight: 600;
  line-height: 44px;
`;

const IconButton = styled.button<{ $before: number }>`
  display: flex;
  margin: 0 0 0 ${(p) => p.$before}px;
  padding: 0;
  border: 0;
  background: none;

  svg {
    height: 60px;
    fill: none;
    stroke: #a0a0a0;
    stroke-width: 3;
    stroke-linecap: round;
    stroke-linejoin: round;
  }
`;

const MessageInput = styled.input`
  flex: 1;
  min-width: 0;
  height: 48px;
  margin: 0 0 0 46px;
  padding: 0 0 4px;
  border: 0;
  outline: 0;
  background: none;
  color: #222222;
  font-size: 33px;

  &::placeholder {
    color: #a3a3a3;
    opacity: 1;
  }
`;

/* ---------- reply keyboard ---------- */

const Keyboard = styled.section`
  flex: none;
  display: flex;
  gap: 13px;
  min-height: 472px;
  padding-left: 6px;
  background: #ffffff;
`;

const Keys = styled.div`
  flex: 1;
  display: grid;
  grid-template-columns: 1fr 1fr;
  grid-auto-rows: minmax(96px, 1fr);
  gap: 26px;
  padding-bottom: 9px;
`;

const Key = styled.button<{ $wide?: boolean }>`
  grid-column: ${(p) => (p.$wide ? '1 / -1' : 'auto')};
  display: flex;
  align-items: center;
  justify-content: center;
  gap: 9px;
  padding: 0;
  border: 0;
  border-radius: 5px;
  background: #f0f0f0;
  color: #262626;
  font-size: 38px;
  font-weight: 600;
  line-height: 48px;
`;

const Track = styled.div`
  width: 10px;
  background: #f0f0f0;
`;

const Thumb = styled.div`
  height: 79%;
  border-radius: 3px;
  background: #999999;
`;

const keys: { icon: EmojiName; text: string; wide?: boolean }[] = [
  { icon: 'chart', text: 'Show store statistics' },
  { icon: 'cart', text: 'Show all orders' },
  { icon: 'plus', text: 'Add new category' },
  { icon: 'plus', text: 'Add new product' },
  { icon: 'folder', text: 'Show all categories' },
  { icon: 'bags', text: 'Show all products' },
  { icon: 'bell', text: 'Send notification to all users', wide: true },
];

export default function App() {
  return (
    <Page>
      <GlobalStyle />
      <Chat>
        <Doodles />
        <Bubble>
          <Line>
            {dashes(22)}
            <Emoji name="chart" />
            {` Statistics${dashes(21)}`}
          </Line>
          {storeStats.map((row) => (
            <Line key={row.text}>
              <Emoji name={row.icon} />
              {` ${row.text}`}
            </Line>
          ))}
          <Line>
            {dashes(25)}
            <Emoji name="box" />
            {` Order${dashes(23)}`}
          </Line>
          {orderStats.map((row) => (
            <Line key={row.text}>
              <Emoji name={row.icon} />
              {` ${row.text}`}
            </Line>
          ))}
          <Line>
            {dashes(59)}
            <Time>2:56 AM</Time>
          </Line>
          <Tail viewBox="0 0 14 36" aria-hidden="true">
            <path d="M14 0C14 14 9 27 1 32C-1 34 0 36 3 36H14Z" />
          </Tail>
        </Bubble>
      </Chat>

      <Composer onSubmit={(e) => e.preventDefault()}>
        <MenuButton type="button">Menu</MenuButton>
        <IconButton type="button" $before={33} aria-label="Attach a file">
          <svg viewBox="0 0 50 60" width="50">
            <path d="M8 27L22 11C29 3 40 4 44 11C49 18 46 26 42 31L24 51C18 58 9 59 5 53C1 47 2 41 7 35L25 16C29 12 35 13 37 17C39 22 37 25 34 29L17 47" />
          </svg>
        </IconButton>
        <MessageInput type="text" aria-label="Message" placeholder="Write a message..." />
        <IconButton type="button" $before={24} aria-label="Hide bot keyboard">
          <svg viewBox="0 0 60 60" width="60">
            <rect x="4" y="3" width="52" height="53" rx="9" />
            <path d="M17 25L30 36L43 25" />
          </svg>
        </IconButton>
        <IconButton type="button" $before={58} aria-label="Record a voice message">
          <svg viewBox="0 0 48 60" width="48">
            <rect x="13" y="2" width="22" height="39" rx="11" />
            <path d="M3 30C3 56 45 56 45 30M24 50V58" />
          </svg>
        </IconButton>
      </Composer>

      <Keyboard aria-label="Bot keyboard">
        <Keys>
          {keys.map((key) => (
            <Key key={key.text} type="button" $wide={key.wide}>
              <Emoji name={key.icon} />
              {key.text}
            </Key>
          ))}
        </Keys>
        <Track>
          <Thumb />
        </Track>
      </Keyboard>

      <Watermark>appeh</Watermark>
    </Page>
  );
}
